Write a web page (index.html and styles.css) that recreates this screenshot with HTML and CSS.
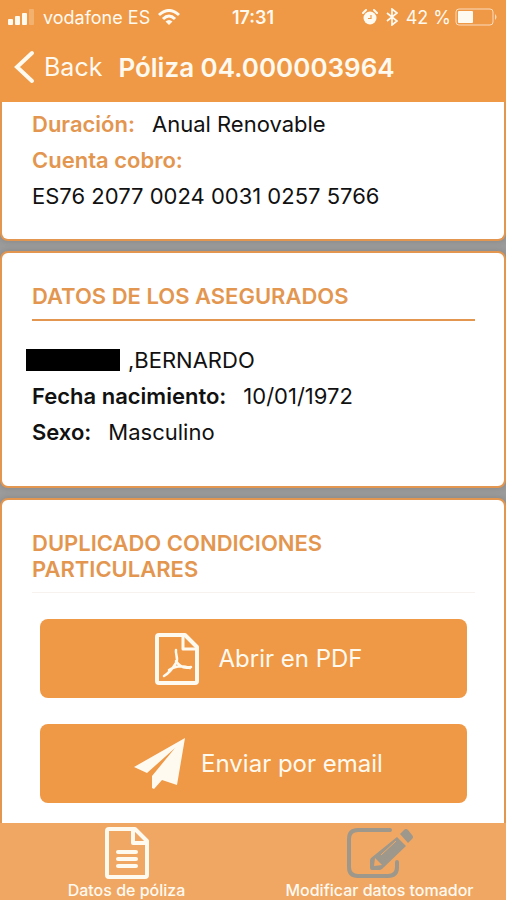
FILE: index.html
```html
<!DOCTYPE html>
<html lang="es">
<head>
    <meta charset="UTF-8">
    <meta name="viewport" content="width=device-width, initial-scale=1.0">
    <title>Póliza 04.000003964</title>
    <link rel="stylesheet" href="styles.css">
</head>
<body>
    <header class="topbar">
        <div class="status">
            <div class="status-side">
                <svg class="signal" width="27" height="16" viewBox="0 0 27 16" fill="currentColor">
                    <rect x="0" y="10" width="5" height="6" rx="1"/>
                    <rect x="7" y="7" width="5" height="9" rx="1"/>
                    <rect x="14" y="4" width="5" height="12" rx="1"/>
                    <rect x="21" y="0" width="5" height="16" rx="1" opacity="0.25"/>
                </svg>
                <span class="carrier">vodafone ES</span>
                <svg width="22" height="16" viewBox="0 0 22 16" fill="none" stroke="currentColor" stroke-width="3">
                    <path d="M1 6 Q11 -3 21 6"/>
                    <path d="M5 10 Q11 4 17 10"/>
                    <path d="M11 16 L7.500 12.500 Q11 9.500 14.500 12.500 Z" fill="currentColor" stroke="none"/>
                </svg>
            </div>
            <span class="clock">17:31</span>
            <div class="status-side status-right">
                <svg width="16" height="16" viewBox="0 0 16 16">
                    <circle cx="8" cy="9" r="6.500" fill="currentColor"/>
                    <path d="M1 4 L4 1 M12 1 L15 4" stroke="currentColor" stroke-width="2" stroke-linecap="round"/>
                    <path d="M9 6 V9.500 H6" fill="none" stroke="#ef9846" stroke-width="1.200"/>
                </svg>
                <svg class="bluetooth" width="12" height="18" viewBox="0 0 12 18" fill="none" stroke="currentColor" stroke-width="1.700">
                    <path d="M1 5 L11 13 L6 17 V1 L11 5 L1 13"/>
                </svg>
                <span>42 %</span>
                <svg width="43" height="18" viewBox="0 0 43 18">
                    <rect x="1" y="1" width="37" height="16" rx="3" fill="none" stroke="currentColor" stroke-width="1" opacity="0.7"/>
                    <rect x="3" y="3" width="15" height="12" rx="1" fill="currentColor"/>
                    <path d="M40 6 Q43 9 40 12 Z" fill="currentColor" opacity="0.7"/>
                </svg>
            </div>
        </div>
        <nav class="navbar">
            <button type="button" class="back-btn">
                <svg width="21" height="34" viewBox="0 0 21 34" fill="none" stroke="currentColor" stroke-width="4" stroke-linecap="round" stroke-linejoin="miter">
                    <path d="M18 3 L3 17 L18 31"/>
                </svg>
                <span>Back</span>
            </button>
            <h1>Póliza 04.000003964</h1>
        </nav>
    </header>

    <main class="content">
        <section class="card card-first">
            <p class="row"><span class="label">Duración:</span><span>Anual Renovable</span></p>
            <p class="row"><span class="label">Cuenta cobro:</span></p>
            <p class="row">ES76 2077 0024 0031 0257 5766</p>
        </section>

        <section class="card card-insured">
            <h2>DATOS DE LOS ASEGURADOS</h2>
            <p class="row row-name"><span class="redacted"></span><span>,BERNARDO</span></p>
            <p class="row"><strong>Fecha nacimiento:</strong><span>10/01/1972</span></p>
            <p class="row"><strong>Sexo:</strong><span>Masculino</span></p>
        </section>

        <section class="card card-actions">
            <h2 class="soft">DUPLICADO CONDICIONES PARTICULARES</h2>
            <button type="button" class="action-btn">
                <svg width="44" height="52" viewBox="0 0 44 52" fill="none" stroke="currentColor" stroke-width="4" stroke-linejoin="round">
                    <path d="M2 4 Q2 2 4 2 H30 L42 14 V48 Q42 50 40 50 H4 Q2 50 2 48 Z"/>
                    <path d="M28 2 V16 H42" stroke-width="3"/>
                    <path d="M21 17 C20 22 24 25 21 30 C18 35 14 40 9 43 M21 28 C24 33 29 36 36 34 M14 37 C20 33 27 32 35 35" stroke-width="2.500" stroke-linecap="round"/>
                </svg>
                <span>Abrir en PDF</span>
            </button>
            <button type="button" class="action-btn action-mail">
                <svg width="51" height="51" viewBox="0 0 51 51" fill="currentColor">
                    <path d="M51 0 L43 47 L28 42 L20 51 L18 50 V38 L41 10 L13 35 L0 29 Z"/>
                </svg>
                <span>Enviar por email</span>
            </button>
        </section>
    </main>

    <nav class="tabbar">
        <a href="#datos" class="tab">
            <svg width="44" height="52" viewBox="0 0 44 52" fill="none" stroke="currentColor" stroke-width="4" stroke-linejoin="round" stroke-linecap="round">
                <path d="M2 4 Q2 2 4 2 H30 L42 14 V48 Q42 50 40 50 H4 Q2 50 2 48 Z"/>
                <path d="M28 2 V16 H42"/>
                <path d="M13 25 H31 M13 32 H31 M13 39 H31"/>
            </svg>
            <span>Datos de póliza</span>
        </a>
        <a href="#modificar" class="tab">
            <svg width="66" height="52" viewBox="0 0 66 52">
                <g fill="none" stroke="#9d988b" stroke-width="4" stroke-linecap="round">
                    <path d="M43 3 H11 Q2 3 2 12 V40 Q2 49 11 49 H41 Q50 49 50 40 V35"/>
                </g>
                <g fill="#9d988b">
                    <path d="M50 10 L59 19 L35 42 Q34 43 32 43 H25 Q23 43 23 41 V34 Q23 32 24 31 Z"/>
                    <path d="M53 7 L57 3 Q59 1 61 3 L65 8 Q67 10 65 12 L61 16 Z"/>
                </g>
                <path d="M28 31 L35 38 L27 39 Z" fill="#f0a763"/>
                <path d="M34 28 L49 14" stroke="#f0a763" stroke-width="1"/>
            </svg>
            <span>Modificar datos tomador</span>
        </a>
    </nav>
</body>
</html>
```
FILE: styles.css
```css
* { margin: 0; padding: 0; box-sizing: border-box; }
body {
    font-family: Inter, "Liberation Sans", sans-serif;
    font-size: 22px;
    color: #111;
    background: #9b9b9b;
    height: 100vh;
    display: flex;
    flex-direction: column;
}
svg { display: block; flex: none; }
button { font: inherit; border: none; cursor: pointer; }

/* header */
.topbar { background: #ef9846; color: #fffaf0; padding-bottom: 8px; flex: none; }
.status { display: flex; align-items: center; height: 34px; padding: 0 8px; font-size: 18px; }
.status-side { flex: 1; display: flex; align-items: center; gap: 8px; white-space: nowrap; }
.status-right { justify-content: flex-end; gap: 4px; }
.bluetooth { margin: 0 4px; }
.clock { font-weight: 600; }
.navbar { display: flex; align-items: center; height: 60px; padding: 6px 14px 0; gap: 16px; }
.back-btn { display: flex; align-items: center; gap: 9px; background: none; color: inherit; font-size: 25px; }
.navbar h1 { font-size: 26px; font-weight: 600; white-space: nowrap; }

/* cards */
.content { flex: 1; min-height: 0; overflow: hidden; display: flex; flex-direction: column; gap: 10px; }
.card {
    flex: none;
    background: #fff;
    border: 2px solid #e3964f;
    border-radius: 8px;
    padding: 30px 29px 36px 30px;
    box-shadow: 0 0 6px rgba(0,0,0,0.15);
}
.card-first { border-top: none; border-radius: 0 0 8px 8px; padding-top: 4px; padding-bottom: 25px; }
.card h2 {
    font-size: 22px;
    line-height: 26px;
    font-weight: 600;
    color: #e3964f;
    padding-bottom: 10px;
    border-bottom: 2px solid #e3964f;
    margin-bottom: 21px;
}
.card h2.soft { border-bottom: 1px solid #f7f2ee; margin-bottom: 26px; }
.row { display: flex; align-items: center; gap: 17px; line-height: 36px; }
.row strong { font-weight: 600; }
.label { color: #e3964f; font-weight: 600; }
.row-name { gap: 8px; margin-left: -6px; }
.redacted { width: 94px; height: 22px; background: #000; }

.card-actions { padding-bottom: 20px; }
.action-btn {
    display: flex;
    align-items: center;
    justify-content: center;
    gap: 20px;
    width: calc(100% - 16px);
    height: 79px;
    margin: 0 8px 26px;
    padding-left: 10px;
    border-radius: 8px;
    background: #ef9846;
    color: #fffaf0;
    font-size: 24px;
}
.action-mail { gap: 16px; }

/* bottom tabs */
.tabbar { flex: none; display: flex; background: #f0a763; height: 77px; padding-top: 4px; }
.tab {
    flex: 1;
    display: flex;
    flex-direction: column;
    align-items: center;
    gap: 1px;
    color: #fffaf0;
    text-decoration: none;
    font-size: 16px;
    line-height: 20px;
    font-weight: 500;
    white-space: nowrap;
}
```
